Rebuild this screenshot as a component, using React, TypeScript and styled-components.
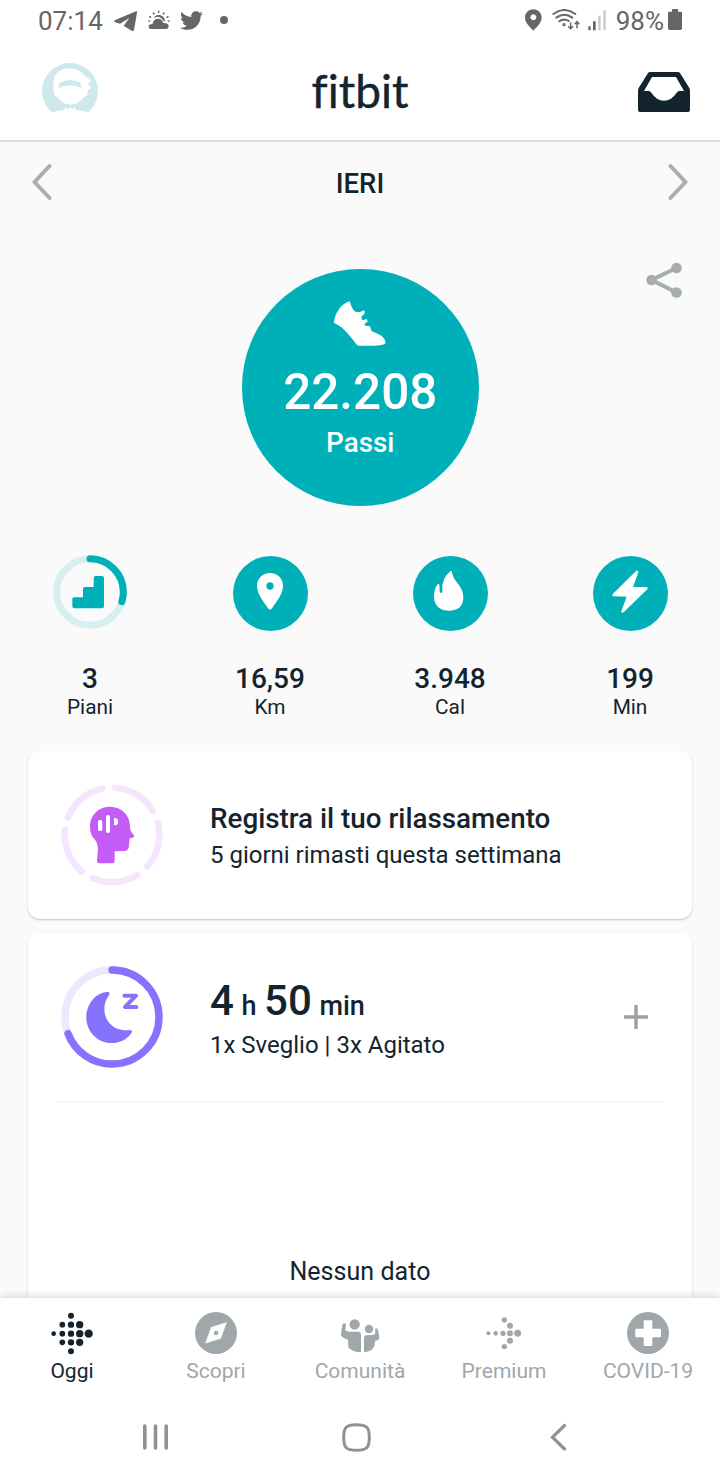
import React from "react";
import styled, { createGlobalStyle } from "styled-components";
import { FaTwitter } from "react-icons/fa";

const ink = "#14242e";
const teal = "#00b0b9";
const muted = "#a0a7aa";
const statusGrey = "#666666";

const GlobalStyle = createGlobalStyle`
  * { box-sizing: border-box; }
  body { margin: 0; background: #fff; font-family: Roboto, sans-serif; color: ${ink}; }
  svg { display: block; flex: none; }
`;

const Screen = styled.div`
  width: 720px;
  height: 1480px;
  display: flex;
  flex-direction: column;
  background: #fff;
  overflow: hidden;
`;

const StatusBar = styled.div`
  height: 40px;
  flex: none;
  display: flex;
  align-items: center;
  justify-content: space-between;
  padding: 0 38px;
  font-size: 26px;
  line-height: 40px;
  color: ${statusGrey};
`;

const StatusGroup = styled.div<{ $gap: number }>`
  display: flex;
  align-items: center;
  gap: ${(p) => p.$gap}px;
`;

const StatusText = styled.span`
  display: block;
  padding-top: 2px;
`;

const MoreDot = styled.span`
  width: 8px;
  height: 8px;
  margin-left: 7px;
  border-radius: 50%;
  background: ${statusGrey};
`;

const Header = styled.header`
  height: 102px;
  flex: none;
  display: flex;
  align-items: center;
  justify-content: space-between;
  padding: 2px 30px 0 42px;
  border-bottom: 2px solid #dcdddd;
`;

const HeaderSide = styled.div<{ $end?: boolean }>`
  width: 120px;
  display: flex;
  justify-content: ${(p) => (p.$end ? "flex-end" : "flex-start")};
  padding-top: ${(p) => (p.$end ? 2 : 0)}px;
`;

const Logo = styled.h1`
  margin: 0 12px 0 0;
  font: 400 46px/60px Lato, sans-serif;
  font-variant-ligatures: none;
  -webkit-text-stroke: 0.4px ${ink};
`;

const Content = styled.main`
  flex: 1;
  min-height: 0;
  overflow: hidden;
  background: #fafafa;
`;

const DateRow = styled.div`
  height: 82px;
  display: flex;
  align-items: center;
  justify-content: space-between;
  padding: 0 32px 2px;
`;

const DateLabel = styled.div`
  font-size: 27.5px;
  font-weight: 500;
  line-height: 32px;
  padding-top: 3px;
`;

const Hero = styled.section`
  height: 331px;
  display: grid;
  grid-template-columns: 1fr 236px 1fr;
  padding: 38px 38px 0;
  align-items: start;
`;

const ShareSlot = styled.div`
  grid-column: 3;
  justify-self: end;
`;

const StepsCircle = styled.div`
  grid-column: 2;
  width: 236.5px;
  height: 236.5px;
  margin-top: 7px;
  border-radius: 50%;
  background: ${teal};
  color: #fff;
  display: flex;
  flex-direction: column;
  align-items: center;
  padding-top: 32px;
`;

const StepsValue = styled.div`
  margin-top: 17px;
  font-size: 49.4px;
  font-weight: 500;
  line-height: 58px;
`;

const StepsLabel = styled.div`
  margin-top: 5px;
  font-size: 27.8px;
  font-weight: 500;
  line-height: 34px;
`;

const Stats = styled.section`
  height: 196px;
  display: grid;
  grid-template-columns: repeat(4, 1fr);
`;

const Stat = styled.div`
  display: flex;
  flex-direction: column;
  align-items: center;
`;

const StatIcon = styled.div<{ $lift?: boolean }>`
  height: 107px;
  padding-top: ${(p) => (p.$lift ? 0 : 1)}px;
`;

const StatValue = styled.div`
  font-size: 28px;
  font-weight: 500;
  line-height: 34px;
`;

const StatLabel = styled.div`
  margin-top: -1px;
  font-size: 20.8px;
  line-height: 24px;
`;

const Cards = styled.div`
  display: flex;
  flex-direction: column;
  gap: 14px;
  padding: 0 28px;
`;

const Card = styled.section<{ $height: number }>`
  height: ${(p) => p.$height}px;
  border-radius: 12px;
  background: #fff;
  box-shadow: 0 1px 2px rgba(0, 0, 0, 0.22);
`;

const CardRow = styled.div`
  height: 168px;
  display: flex;
  align-items: center;
  padding: 0 43px 0 33px;
`;

const CardText = styled.div`
  margin-left: 47px;
  padding-top: 4px;
  flex: 1;
`;

const CardTitle = styled.div`
  font-size: 27.8px;
  font-weight: 500;
  line-height: 36px;
`;

const CardSub = styled.div`
  font-size: 24px;
  line-height: 36px;
`;

const Duration = styled.div`
  font-size: 27px;
  font-weight: 500;
  line-height: 47px;
  padding-top: 2px;
  margin-bottom: -3px;
  word-spacing: 0.9px;
`;

const Big = styled.span`
  font-size: 42px;
`;

const Divider = styled.div`
  height: 2px;
  margin: 0 28px;
  background: #f9f9f9;
`;

const Empty = styled.div`
  margin-top: 152px;
  text-align: center;
  font-size: 25px;
  letter-spacing: 0.05px;
  line-height: 34px;
`;

const TabBar = styled.nav`
  height: 98px;
  flex: none;
  display: grid;
  grid-template-columns: repeat(5, 1fr);
  background: #fff;
  box-shadow: 0 0 9px rgba(0, 0, 0, 0.2);
  z-index: 1;
`;

const Tab = styled.div<{ $active?: boolean }>`
  display: flex;
  flex-direction: column;
  align-items: center;
  font-size: 21px;
  line-height: 26px;
  color: ${(p) => (p.$active ? ink : muted)};
`;

const TabIcon = styled.div`
  height: 60px;
  padding-top: 10px;
  display: flex;
  align-items: center;
`;

const SystemNav = styled.div`
  height: 84px;
  flex: none;
  display: flex;
  justify-content: space-between;
  align-items: center;
  padding: 0 153px 2px 142px;
  background: #fff;
  z-index: 1;
`;

const HomeSlot = styled.div`
  margin-right: 6px;
`;

const Telegram = () => (
  <svg width="25" height="23" viewBox="-3 -6 75 69" fill={statusGrey}>
    <path d="M2 28 L66 1 Q70 0 69 5 L60 57 Q58 62 53 59 L29 44 L46 21 L18 38 L3 34 Q-1 31 2 28Z" />
  </svg>
);

const Weather = () => (
  <svg width="22" height="20" viewBox="0 0 66 60">
    <path d="M17 25 Q22 13 35 15 Q50 18 51 34 Q48 34 46 32 Q40 21 30 20 Q22 20 17 25Z" fill={statusGrey} />
    <path d="M9 57 Q1 56 2 49 Q3 42 13 42 Q18 26 30 26 Q42 26 46 39 Q62 39 62 48 Q62 57 54 57Z" fill={statusGrey} />
    <g stroke={statusGrey} strokeWidth="4.5" strokeLinecap="round">
      <path d="M32 4v3M16 9l2 3M48 9l-2 3M5 20l3 2M60 20l-3 2M3 33h2M61 33h2" />
    </g>
  </svg>
);

const LocationPin = () => (
  <svg width="17" height="22" viewBox="0 0 51 66" fill={statusGrey} fillRule="evenodd">
    <path d="M25 1 C40 1 50 12 50 26 C50 42 34 54 25 65 C16 54 0 42 0 26 C0 12 10 1 25 1Z M25 16 a9 9 0 1 0 0.1 0Z" />
  </svg>
);

const Wifi = () => (
  <svg width="29" height="22" viewBox="0 0 87 66" fill="none" stroke={statusGrey} strokeWidth="6" strokeLinecap="round">
    <path d="M4 15 Q37 -9 70 15M13 26 Q37 8 61 26M22 37 Q36 26 50 36" />
    <circle cx="36" cy="47" r="2" />
    <path d="M56 42V58M50 53L56 59L62 53M75 56V38M69 44L75 38L81 44" strokeWidth="4.5" />
  </svg>
);

const Signal = () => (
  <svg width="19" height="22" viewBox="0 0 57 66">
    <path d="M1 52h7v12h-7zM15 37h8v27h-8z" fill={statusGrey} />
    <path d="M31 20h7v44h-7zM46 4h7v60h-7z" fill="#c8c8c8" />
  </svg>
);

const Battery = () => (
  <svg width="14" height="22" viewBox="0 0 42 66" fill={statusGrey}>
    <path d="M12 0h18v8h9q3 0 3 4v46q0 5-5 5H5q-5 0-5-5V12q0-4 3-4h9z" />
  </svg>
);

const Avatar = () => (
  <svg width="56" height="56" viewBox="0 0 168 168">
    <circle cx="84" cy="84" r="84" fill="#cfe9ea" />
    <path
      d="M35 56 Q37 18 84 16 Q112 16 128 38 Q138 43 146 53 L138 62 L148 74 L138 82 L136 97 L126 102 Q106 126 84 125 Q62 122 48 104 L37 97 L34 78Z"
      fill="#fff"
    />
    <path d="M49 75 L52 60 Q84 42 116 60 L119 75 Q84 58 49 75Z" fill="#cfe9ea" />
    <path d="M10 168 L24 151 Q40 143 66 142 L70 132 L78 140 L84 132 L92 139 L98 132 L103 142 Q128 143 144 151 L158 168Z" fill="#fff" />
  </svg>
);

const Inbox = () => (
  <svg width="52" height="40" viewBox="0 0 156 120" fill={ink} fillRule="evenodd">
    <path d="M37 0 H119 Q124 0 126 3 L154 48 Q156 51 156 56 V114 Q156 120 150 120 H6 Q0 120 0 114 V56 Q0 51 2 48 L30 3 Q32 0 37 0Z M42 15 L18 57 H32 Q37 57 40 62 Q56 86 78 86 Q100 86 116 62 Q119 57 124 57 H138 L114 15Z" />
  </svg>
);

const Chevron = ({ right }: { right?: boolean }) => (
  <svg width="20" height="38" viewBox="0 0 20 38" fill="none" stroke="#adadad" strokeWidth="4" strokeLinecap="round" strokeLinejoin="round">
    <path d={right ? "M2.5 3L17.5 19L2.5 35" : "M17.5 3L2.5 19L17.5 35"} />
  </svg>
);

const Share = () => (
  <svg width="37" height="37" viewBox="0 0 37 37">
    <path d="M31.5 6L6.500 18L31.500 30.500" fill="none" stroke="#a5adb0" strokeWidth="4" />
    <g fill="#a5adb0">
      <circle cx="31.500" cy="6" r="5.300" />
      <circle cx="6.500" cy="18" r="5.300" />
      <circle cx="31.500" cy="30.500" r="5.300" />
    </g>
  </svg>
);

const Shoe = () => (
  <svg width="52" height="45" viewBox="0 0 156 135" fill="#fff">
    <path d="M45 1 L48 3 Q53 22 61 30 Q73 38 89 28 L92 30 Q93 42 82 46 L84 58 L98 54 L101 61 L91 70 L94 74 L108 76 L113 91 Q126 96 140 103 Q156 114 154 128 Q146 133 120 134 H74 Q70 134 67 130 Q50 106 36 92 Q20 74 0 65 Q0 46 14 26 Q27 8 45 1Z" />
  </svg>
);

const FloorsRing = () => (
  <svg width="74" height="74" viewBox="0 0 222 222">
    <circle cx="111" cy="111" r="100" fill="none" stroke="#d7efef" strokeWidth="21" />
    <circle
      cx="111" cy="111" r="100" fill="none" stroke={teal} strokeWidth="21" strokeLinecap="round"
      pathLength="360" strokeDasharray="107 253" transform="rotate(-90 111 111)"
    />
    <path
      transform="translate(58 63)" fill={teal}
      d="M5 64 H32 V38 Q32 33 37 33 H64 V6 Q64 0 70 0 H89 Q95 0 95 6 V91 Q95 97 89 97 H6 Q0 97 0 91 V69 Q0 64 5 64Z"
    />
  </svg>
);

const Badge = ({ children }: { children: React.ReactNode }) => (
  <svg width="75" height="75" viewBox="0 0 225 225">
    <circle cx="112.5" cy="112.5" r="112.5" fill={teal} />
    {children}
  </svg>
);

const PinBadge = () => (
  <Badge>
    <g transform="translate(72 51)">
      <path d="M39 0 C62 0 78 17 78 39 C78 62 60 84 45 106 Q39 114 33 106 C18 84 0 62 0 39 C0 17 16 0 39 0Z" fill="#fff" />
      <circle cx="39" cy="39" r="11" fill={teal} />
    </g>
  </Badge>
);

const FlameBadge = () => (
  <Badge>
    <path
      transform="translate(63 44)" fill="#fff"
      d="M50 1 Q54 -1 54 5 Q56 22 74 42 Q88 60 88 80 Q88 118 48 120 Q2 120 0 78 Q0 54 11 41 Q15 37 16 42 L17 62 Q18 68 22 67 Q26 65 25 60 Q22 22 50 1Z"
    />
  </Badge>
);

const BoltBadge = () => (
  <Badge>
    <path
      transform="translate(58 44)" fill="#fff" stroke="#fff" strokeWidth="8" strokeLinejoin="round"
      d="M74 4 L57 52 L102 53 L31 122 L49 74 L4 73Z"
    />
  </Badge>
);

const MindRing = () => (
  <svg width="102" height="102" viewBox="0 0 306 306">
    <circle
      cx="153" cy="153" r="142" fill="none" stroke="#f5e6fd" strokeWidth="20" strokeLinecap="round"
      pathLength="360" strokeDasharray="56 16" transform="rotate(-86.4 153 153)"
    />
    <g transform="translate(87 68)">
      <path
        fill="#c45cf8"
        d="M60 0 C95 0 120 25 120 60 Q119 68 124 76 L133 87 Q133 94 119 94 L117 118 Q116 132 104 133 L74 134 V160 Q74 170 68 170 H28 Q21 170 21 164 L24 124 Q24 110 14 98 Q0 84 0 60 C0 25 26 0 60 0Z"
      />
      <rect x="24" y="40" width="13" height="33" rx="5" fill="#fff" />
      <rect x="48" y="25" width="12" height="54" rx="5" fill="#fff" />
      <path d="M72 35 Q78 31 84 40 V50 Q79 60 72 54Z" fill="#fff" />
    </g>
  </svg>
);

const SleepRing = () => (
  <svg width="102" height="102" viewBox="0 0 306 306">
    <circle cx="153" cy="153" r="141" fill="none" stroke="#ece8fe" strokeWidth="22" />
    <circle
      cx="153" cy="153" r="141" fill="none" stroke="#8573fd" strokeWidth="22" strokeLinecap="round"
      pathLength="360" strokeDasharray="249 111" transform="rotate(-90 153 153)"
    />
    <path
      transform="translate(76 77)" fill="#8573fd"
      d="M62 1 Q72 0 69 9 C50 32 48 70 70 95 C86 114 110 118 130 115 Q140 116 136 123 C120 146 98 154 76 154 C32 154 0 118 0 78 C0 36 28 4 62 1Z"
    />
    <path d="M190 89H225L192 123H226" fill="none" stroke="#8573fd" strokeWidth="12" strokeLinecap="round" strokeLinejoin="round" />
  </svg>
);

const Plus = () => (
  <svg width="26" height="26" viewBox="0 0 26 26" stroke="#9da1a4" strokeWidth="3.5">
    <path d="M13 1V25M1 13H25" />
  </svg>
);

type DotSpec = [number, number, number];

const todayDots: DotSpec[] = [
  [8, 65, 7], [34, 38, 8.5], [34, 65, 8.5], [34, 91, 8.5],
  [60, 11, 9], [60, 38, 9.5], [60, 65, 9.5], [60, 91, 9.5], [60, 118, 9],
  [86, 38, 11], [86, 65, 11], [86, 91, 11], [113, 65, 12.5],
];

const premiumDots: DotSpec[] = [
  [7, 49, 6], [29, 49, 7], [51, 49, 8], [72, 49, 9], [95, 49, 10.5],
  [55, 9, 8], [72, 26, 9], [72, 71, 9], [55, 89, 8],
];

const Dots = ({ dots, w, h, fill }: { dots: DotSpec[]; w: number; h: number; fill: string }) => (
  <svg width={w / 3} height={h / 3} viewBox={`0 0 ${w} ${h}`} fill={fill}>
    {dots.map(([x, y, r]) => (
      <circle key={`${x}-${y}`} cx={x} cy={y} r={r} />
    ))}
  </svg>
);

const Compass = () => (
  <svg width="42" height="42" viewBox="0 0 126 126">
    <circle cx="63" cy="63" r="63" fill={muted} />
    <path d="M94 32L77 79L32 93L49 46Z" fill="#fff" stroke="#fff" strokeWidth="2" strokeLinejoin="round" />
    <circle cx="63" cy="63" r="7" fill={muted} />
  </svg>
);

const Community = () => (
  <svg width="39" height="40" viewBox="0 -18 117 120" fill={muted}>
    <circle cx="41" cy="16" r="15.5" />
    <circle cx="84" cy="30" r="12.5" />
    <path d="M5 16 Q9 10 15 15 L13 33 Q16 38 26 38 H54 Q60 39 60 46 V100 Q38 100 24 88 Q21 84 21 62 Q8 60 0 50 Q0 30 5 16Z" />
    <path d="M69 56 Q70 49 76 49 L96 48 Q104 46 103 42 L102 32 Q105 25 110 30 Q114 44 115 58 Q114 64 102 66 Q102 84 92 92 Q82 99 69 100Z" />
  </svg>
);

const Covid = () => (
  <svg width="42" height="42" viewBox="0 0 126 126">
    <circle cx="63" cy="63" r="63" fill={muted} />
    <path d="M53 25H73Q76 25 76 28V50H98Q102 50 102 54V72Q102 76 98 76H76V98Q76 102 72 102H54Q50 102 50 98V76H28Q25 76 25 72V54Q25 50 28 50H50V28Q50 25 53 25Z" fill="#fff" />
  </svg>
);

const Recents = () => (
  <svg width="27" height="28" viewBox="0 0 27 28" stroke="#919191" strokeWidth="3.6" strokeLinecap="round">
    <path d="M2.8 3V25M13.5 3V25M24.2 3V25" />
  </svg>
);

const Home = () => (
  <svg width="29" height="29" viewBox="0 0 29 29" fill="none" stroke="#919191" strokeWidth="3">
    <path d="M14.5 1.7C24.8 1.7 27.3 4.2 27.3 14.5C27.3 24.8 24.8 27.3 14.5 27.3C4.2 27.3 1.7 24.8 1.7 14.5C1.7 4.2 4.2 1.7 14.5 1.7Z" />
  </svg>
);

const Back = () => (
  <svg width="17" height="28" viewBox="0 0 17 28" fill="none" stroke="#919191" strokeWidth="3.2" strokeLinecap="round" strokeLinejoin="miter">
    <path d="M14.5 2.5L2.5 14.2L14.5 26" />
  </svg>
);

const stats = [
  { icon: <FloorsRing />, value: "3", label: "Piani", lift: true },
  { icon: <PinBadge />, value: "16,59", label: "Km" },
  { icon: <FlameBadge />, value: "3.948", label: "Cal" },
  { icon: <BoltBadge />, value: "199", label: "Min" },
];

const tabs = [
  { icon: <Dots dots={todayDots} w={126} h={129} fill={ink} />, label: "Oggi", active: true },
  { icon: <Compass />, label: "Scopri" },
  { icon: <Community />, label: "Comunità" },
  { icon: <Dots dots={premiumDots} w={106} h={98} fill={muted} />, label: "Premium" },
  { icon: <Covid />, label: "COVID-19" },
];

export default function App() {
  return (
    <Screen>
      <GlobalStyle />
      <StatusBar>
        <StatusGroup $gap={10}>
          <StatusText>07:14</StatusText>
          <Telegram />
          <Weather />
          <FaTwitter size={23} />
          <MoreDot />
        </StatusGroup>
        <StatusGroup $gap={9}>
          <StatusGroup $gap={10}>
            <LocationPin />
            <StatusGroup $gap={7}>
              <Wifi />
              <Signal />
            </StatusGroup>
          </StatusGroup>
          <StatusGroup $gap={4}>
            <StatusText>98%</StatusText>
            <Battery />
          </StatusGroup>
        </StatusGroup>
      </StatusBar>

      <Header>
        <HeaderSide>
          <Avatar />
        </HeaderSide>
        <Logo>fitbit</Logo>
        <HeaderSide $end>
          <Inbox />
        </HeaderSide>
      </Header>

      <Content>
        <DateRow>
          <Chevron />
          <DateLabel>IERI</DateLabel>
          <Chevron right />
        </DateRow>

        <Hero>
          <StepsCircle>
            <Shoe />
            <StepsValue>22.208</StepsValue>
            <StepsLabel>Passi</StepsLabel>
          </StepsCircle>
          <ShareSlot>
            <Share />
          </ShareSlot>
        </Hero>

        <Stats>
          {stats.map((s) => (
            <Stat key={s.label}>
              <StatIcon $lift={s.lift}>{s.icon}</StatIcon>
              <StatValue>{s.value}</StatValue>
              <StatLabel>{s.label}</StatLabel>
            </Stat>
          ))}
        </Stats>

        <Cards>
          <Card $height={168}>
            <CardRow>
              <MindRing />
              <CardText>
                <CardTitle>Registra il tuo rilassamento</CardTitle>
                <CardSub>5 giorni rimasti questa settimana</CardSub>
              </CardText>
            </CardRow>
          </Card>
          <Card $height={420}>
            <CardRow>
              <SleepRing />
              <CardText>
                <Duration>
                  <Big>4</Big> h <Big>50</Big> min
                </Duration>
                <CardSub>1x Sveglio | 3x Agitato</CardSub>
              </CardText>
              <Plus />
            </CardRow>
            <Divider />
            <Empty>Nessun dato</Empty>
          </Card>
        </Cards>
      </Content>

      <TabBar>
        {tabs.map((t) => (
          <Tab key={t.label} $active={t.active}>
            <TabIcon>{t.icon}</TabIcon>
            {t.label}
          </Tab>
        ))}
      </TabBar>

      <SystemNav>
        <Recents />
        <HomeSlot>
          <Home />
        </HomeSlot>
        <Back />
      </SystemNav>
    </Screen>
  );
}
